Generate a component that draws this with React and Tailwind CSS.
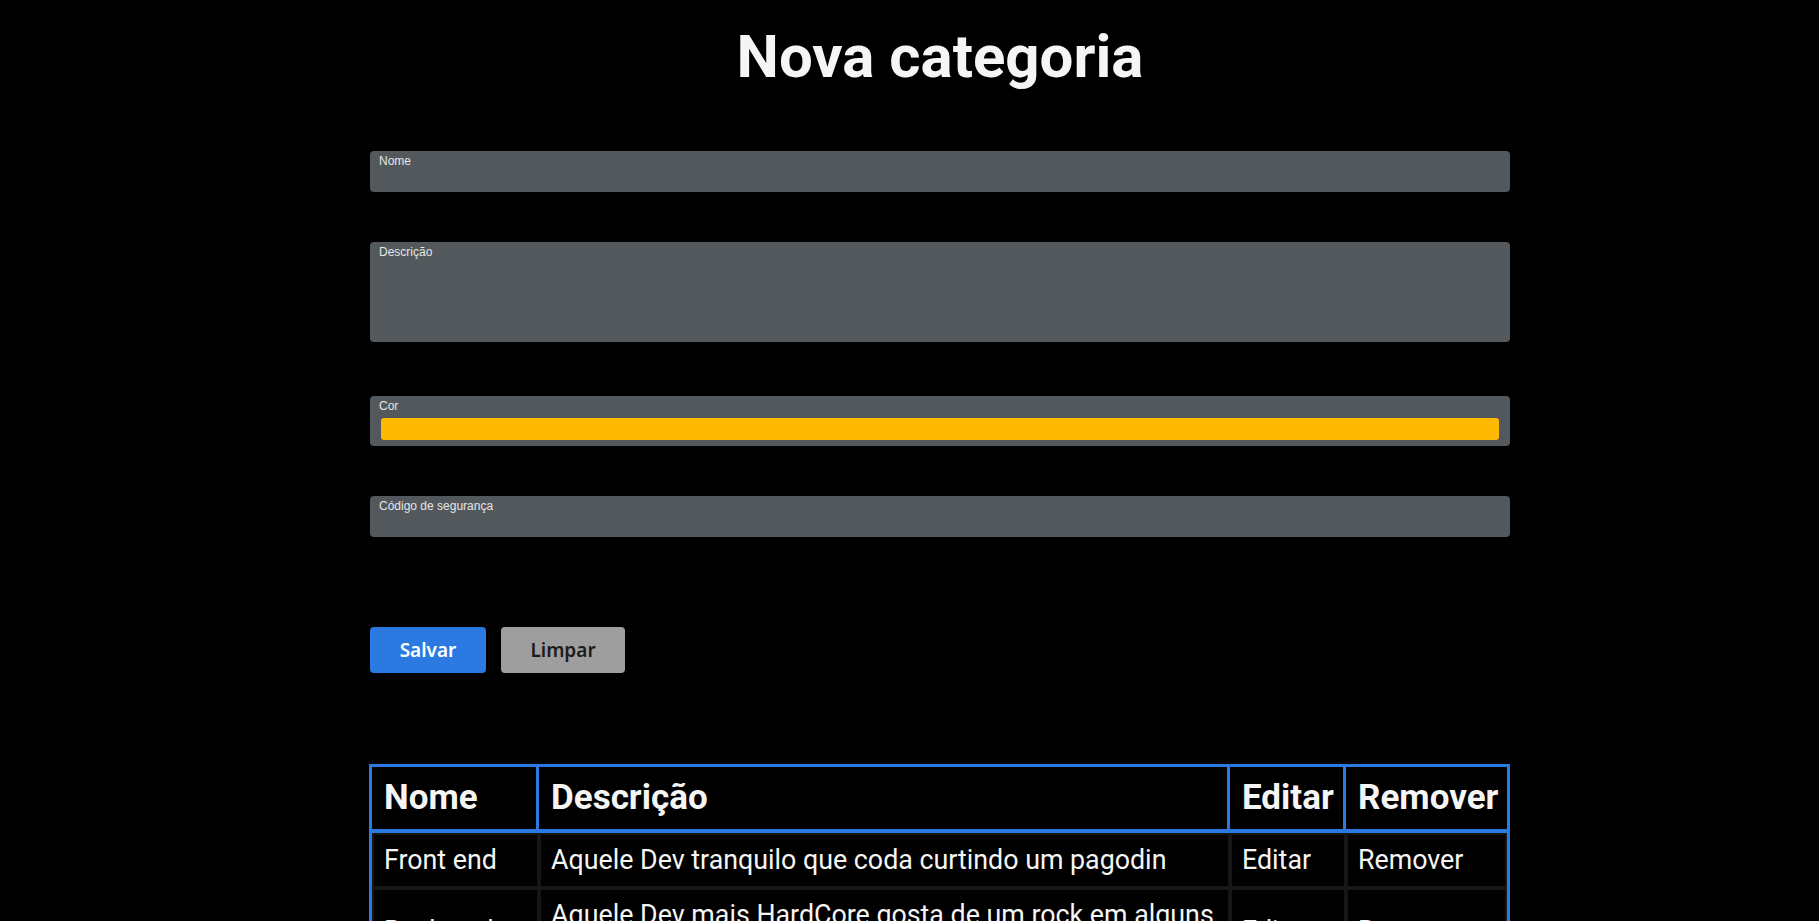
import React from "react";

const rows = [
  { nome: "Front end", descricao: "Aquele Dev tranquilo que coda curtindo um pagodin" },
  {
    nome: "Back end",
    descricao: "Aquele Dev mais HardCore gosta de um rock em alguns momentos do dia",
  },
];

const Field = ({ label, height = "h-[41px]", children }) => {
  return (
    <div className={`w-full ${height} rounded-[4px] bg-[#53585c] px-2 pt-[3px]`}>
      <label className="block pl-px text-[12px] leading-[14px] text-[#e3e6ea] font-['Liberation_Sans',Arial,sans-serif]">
        {label}
      </label>
      {children}
    </div>
  );
};

const App = () => {
  return (
    <div className="min-h-screen bg-black text-[#f5f5f5] font-['Roboto',sans-serif]">
      <div className="ml-[370px] w-[1140px] pb-10">
        <h1 className="pt-[27px] text-center text-6xl leading-none font-bold text-[#f5f5f5]">
          Nova categoria
        </h1>

        <form className="mt-[64px] flex flex-col">
          <Field label="Nome" />
          <div className="mt-[50px]">
            <Field label="Descrição" height="h-[100px]" />
          </div>
          <div className="mt-[54px]">
            <Field label="Cor" height="h-[50px]">
              <div className="mt-[5px] ml-[3px] mr-[3px] h-[22px] rounded-[3px] bg-[#ffb900]" />
            </Field>
          </div>
          <div className="mt-[50px]">
            <Field label="Código de segurança" />
          </div>

          <div className="mt-[90px] flex gap-[15px] font-['Noto_Sans',sans-serif]">
            <button
              type="button"
              className="h-[46px] w-[116px] rounded-[4px] bg-[#2a7ae2] text-[19px] font-semibold text-white"
            >
              Salvar
            </button>
            <button
              type="button"
              className="h-[46px] w-[124px] rounded-[4px] bg-[#9e9e9e] text-[19px] font-semibold text-[#1c1c1c]"
            >
              Limpar
            </button>
          </div>
        </form>

        <table className="-ml-px mt-[91px] w-[1141px] table-fixed border-separate border-spacing-0 border-[3px] border-[#2a7ae2]">
          <thead>
            <tr className="text-left text-[35px] leading-[1.17] font-bold">
              <th className="w-[167px] border-r-[3px] border-b-4 border-[#2a7ae2] px-3 py-[10.5px]">Nome</th>
              <th className="w-[691px] border-r-[3px] border-b-4 border-[#2a7ae2] px-3 py-[10.5px]">Descrição</th>
              <th className="w-[116px] border-r-[3px] border-b-4 border-[#2a7ae2] px-3 py-[10.5px]">Editar</th>
              <th className="w-[161px] border-b-4 border-[#2a7ae2] px-3 py-[10.5px]">Remover</th>
            </tr>
          </thead>
          <tbody className="text-[26.8px] leading-[1.17]">
            {rows.map((row) => (
              <tr key={row.nome}>
                <td className="border-2 border-[#161616] px-[10px] py-[10px]">{row.nome}</td>
                <td className="border-2 border-[#161616] pl-[10px] pr-[2px] py-[10px]">{row.descricao}</td>
                <td className="border-2 border-[#161616] px-[10px] py-[10px]">Editar</td>
                <td className="border-2 border-[#161616] px-[10px] py-[10px]">Remover</td>
              </tr>
            ))}
          </tbody>
        </table>
      </div>
    </div>
  );
};

export default App;
